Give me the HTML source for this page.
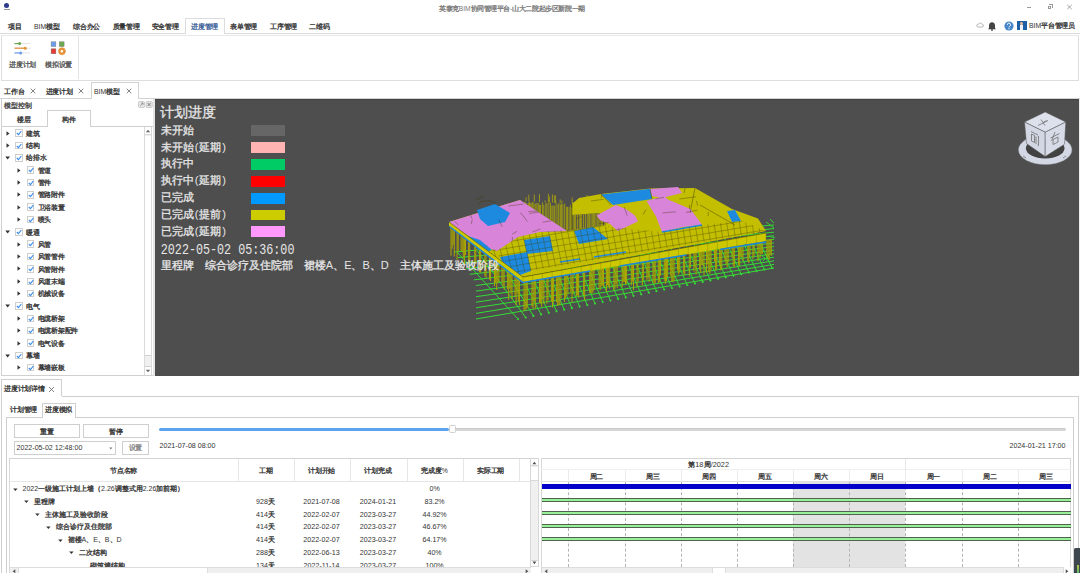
<!DOCTYPE html>
<html><head><meta charset="utf-8">
<style>
*{margin:0;padding:0;box-sizing:border-box}
html,body{width:1080px;height:573px;overflow:hidden;background:#fff;font-family:"Liberation Sans",sans-serif;color:#333}
.a{position:absolute;white-space:nowrap}
.t{font-size:6.8px;line-height:8px;color:#333}
.ln{position:absolute;background:#d9d9d9}
.p{display:inline-block;width:.5em;text-align:center;font-weight:normal}
i{display:inline-block;width:1em;text-align:center;font-style:normal;-webkit-text-stroke:.3px}
</style></head><body>
<!-- TITLE BAR -->
<div class="a" style="left:4px;top:3px;width:5px;height:5px;border-radius:50%;background:#2b3a8a"></div>
<div class="a" style="left:3.5px;top:8.5px;width:6px;height:1.2px;background:#999"></div>
<div class="a t" style="left:439px;top:5px;font-size:6.6px;color:#777"><i>英</i><i>泰</i><i>克</i>BIM<i>协</i><i>同</i><i>管</i><i>理</i><i>平</i><i>台</i>-<i>山</i><i>大</i><i>二</i><i>院</i><i>起</i><i>步</i><i>区</i><i>新</i><i>院</i><i>一</i><i>期</i></div>
<div class="a" style="left:1027px;top:7.2px;width:4px;height:0.8px;background:#999"></div>
<div class="a" style="left:1047.5px;top:5.5px;width:3.5px;height:3.5px;border:0.8px solid #999"></div>
<div class="a" style="left:1049px;top:4.3px;width:3.5px;height:3.5px;border-top:0.8px solid #999;border-right:0.8px solid #999"></div>
<svg class="a" style="left:1066px;top:4px" width="7" height="6"><path d="M1.2 0.8L5.8 5.2M5.8 0.8L1.2 5.2" stroke="#888" stroke-width="0.75"/></svg>

<!-- MENU BAR -->
<div class="a t" style="left:7.8px;top:22.5px"><i>项</i><i>目</i></div>
<div class="a t" style="left:34px;top:22.5px">BIM<i>模</i><i>型</i></div>
<div class="a t" style="left:73px;top:22.5px"><i>综</i><i>合</i><i>办</i><i>公</i></div>
<div class="a t" style="left:112.5px;top:22.5px"><i>质</i><i>量</i><i>管</i><i>理</i></div>
<div class="a t" style="left:151.5px;top:22.5px"><i>安</i><i>全</i><i>管</i><i>理</i></div>
<div class="a" style="left:185px;top:18px;width:40px;height:16px;border:1px solid #dcdcdc;border-bottom:none;background:#fff"></div>
<div class="a t" style="left:191px;top:22.5px;color:#3d5f9a"><i>进</i><i>度</i><i>管</i><i>理</i></div>
<div class="a t" style="left:230px;top:22.5px"><i>表</i><i>单</i><i>管</i><i>理</i></div>
<div class="a t" style="left:270px;top:22.5px"><i>工</i><i>序</i><i>管</i><i>理</i></div>
<div class="a t" style="left:309px;top:22.5px"><i>二</i><i>维</i><i>码</i></div>
<div class="ln" style="left:0;top:33px;width:185px;height:1px"></div>
<div class="ln" style="left:225px;top:33px;width:855px;height:1px"></div>
<!-- right icons -->
<svg class="a" style="left:975.5px;top:22px" width="8" height="6"><path d="M1.8 5h4.4a1.3 1.3 0 0 0 0-2.6a1.8 1.8 0 0 0-3.4-.3a1.4 1.4 0 0 0-1 2.9z" fill="none" stroke="#999" stroke-width="0.7"/></svg>
<svg class="a" style="left:987px;top:20.5px" width="10" height="10"><path d="M5 1.2c-2 0-3 1.6-3 3.4v2.4l-1 1.2h8l-1-1.2V4.6c0-1.8-1-3.4-3-3.4z" fill="#444"/><circle cx="5" cy="9" r="0.9" fill="#444"/></svg>
<svg class="a" style="left:1003.5px;top:20.5px" width="10" height="10"><circle cx="5" cy="5" r="4.6" fill="#4a87c9"/><path d="M3.4 3.8a1.6 1.6 0 1 1 2.3 1.4c-.5.3-.7.6-.7 1.2" fill="none" stroke="#fff" stroke-width="1"/><circle cx="5" cy="7.7" r="0.6" fill="#fff"/></svg>
<div class="a" style="left:1017px;top:20.5px;width:9.5px;height:9.5px;background:#1f5fa8"></div>
<div class="a" style="left:1020.3px;top:21.8px;width:3px;height:3.4px;border-radius:50%;background:#e8b890"></div>
<div class="a" style="left:1020.2px;top:25.3px;width:3.2px;height:4.7px;background:#eef3f8"></div>
<div class="a t" style="left:1029px;top:22px">BIM<i>平</i><i>台</i><i>管</i><i>理</i><i>员</i></div>

<!-- RIBBON -->
<div class="a" style="left:1px;top:34.5px;width:1078px;height:46px;border:1px solid #dedede;border-top-color:#e8e8e8"></div>
<div class="ln" style="left:78px;top:36px;width:1px;height:43px;background:#e4e4e4"></div>
<svg class="a" style="left:13px;top:40px" width="20" height="16">
 <line x1="1.5" y1="3.6" x2="17.5" y2="3.6" stroke="#e3e3e3" stroke-width="1"/>
 <line x1="1.5" y1="3.6" x2="6.6" y2="3.6" stroke="#6aa84f" stroke-width="1.2"/>
 <circle cx="6.6" cy="3.6" r="1.5" fill="#6aa84f"/>
 <line x1="1.5" y1="8.2" x2="17.5" y2="8.2" stroke="#e3e3e3" stroke-width="1"/>
 <line x1="1.5" y1="8.2" x2="12.2" y2="8.2" stroke="#e69138" stroke-width="1.2"/>
 <circle cx="12.2" cy="8.2" r="1.5" fill="#e69138"/>
 <line x1="1.5" y1="12.9" x2="17.5" y2="12.9" stroke="#e3e3e3" stroke-width="1"/>
 <line x1="1.5" y1="12.9" x2="7.7" y2="12.9" stroke="#6d9eeb" stroke-width="1.2"/>
 <circle cx="7.7" cy="12.9" r="1.5" fill="#6d9eeb"/>
</svg>
<svg class="a" style="left:50px;top:41px" width="18" height="16">
 <rect x="1.1" y="0.8" width="4.8" height="4.8" fill="#6d9eeb" stroke="#777" stroke-width="0.4"/>
 <rect x="9.3" y="0.8" width="4.8" height="4.8" fill="#6aa84f" stroke="#777" stroke-width="0.4"/>
 <rect x="1.1" y="7.8" width="4.8" height="5" fill="#e53935" stroke="#777" stroke-width="0.4"/>
 <circle cx="11.9" cy="10.2" r="2.4" fill="none" stroke="#e69138" stroke-width="2.2"/>
 <circle cx="11.9" cy="10.2" r="3.6" fill="none" stroke="#e69138" stroke-width="0.9" stroke-dasharray="1.2 1.1"/>
</svg>
<div class="a t" style="left:9px;top:61.3px;color:#555"><i>进</i><i>度</i><i>计</i><i>划</i></div>
<div class="a t" style="left:45px;top:61.3px;color:#555"><i>模</i><i>拟</i><i>设</i><i>置</i></div>

<!-- DOC TABS -->
<div class="a t" style="left:4.2px;top:87.7px"><i>工</i><i>作</i><i>台</i></div>
<svg class="a" style="left:29.5px;top:88px" width="6" height="6"><path d="M0.7 0.7L5.3 5.3M5.3 0.7L0.7 5.3" stroke="#666" stroke-width="0.8"/></svg>
<div class="a t" style="left:45.5px;top:87.7px"><i>进</i><i>度</i><i>计</i><i>划</i></div>
<svg class="a" style="left:77.8px;top:88px" width="6" height="6"><path d="M0.7 0.7L5.3 5.3M5.3 0.7L0.7 5.3" stroke="#666" stroke-width="0.8"/></svg>
<div class="ln" style="left:0;top:98px;width:1080px;height:1px;background:#d2d2d2"></div>
<div class="a" style="left:90.5px;top:82px;width:48px;height:17px;border:1px solid #d2d2d2;border-bottom:none;background:#fff"></div>
<div class="a t" style="left:94px;top:87.7px">BIM<i>模</i><i>型</i></div>
<svg class="a" style="left:125.8px;top:88px" width="6" height="6"><path d="M0.7 0.7L5.3 5.3M5.3 0.7L0.7 5.3" stroke="#666" stroke-width="0.8"/></svg>

<!-- MAIN: LEFT PANEL -->
<div class="a" style="left:1px;top:99px;width:151.5px;height:277px;border-left:1px solid #d0d0d0;border-bottom:1.4px solid #d0d0d0;background:#fff"></div>
<div class="a t" style="left:4.3px;top:101.5px;color:#444"><i>模</i><i>型</i><i>控</i><i>制</i></div>
<svg class="a" style="left:137.5px;top:101px" width="15" height="7"><rect x="0.5" y="0.5" width="6" height="6" rx="1" fill="#e6e6e6" stroke="#aaa" stroke-width="0.5"/><path d="M2 5L5 2M3 2h2v2" stroke="#777" stroke-width="0.6" fill="none"/><rect x="8" y="0.5" width="6.3" height="6" rx="1" fill="#e6e6e6" stroke="#aaa" stroke-width="0.5"/><path d="M9.6 2l3 3M12.6 2l-3 3" stroke="#555" stroke-width="0.7"/></svg>
<div class="ln" style="left:1.5px;top:126px;width:45px;height:1px;background:#cfcfcf"></div>
<div class="ln" style="left:90.5px;top:126px;width:62px;height:1px;background:#cfcfcf"></div>
<div class="a" style="left:46.5px;top:110.4px;width:44px;height:16.6px;border:1px solid #cfcfcf;border-bottom:none;background:#fff"></div>
<div class="a t" style="left:17px;top:115.5px"><i>楼</i><i>层</i></div>
<div class="a t" style="left:62px;top:115.5px"><i>构</i><i>件</i></div>
<div class="a" style="left:144.3px;top:126.5px;width:7.6px;height:248px;background:#f0f0f0;border-left:1px solid #dadada;border-right:1px solid #dadada"></div>
<div class="a" style="left:144.8px;top:126.8px;width:6.6px;height:8px;background:#fff;border-bottom:1px solid #d8d8d8"></div>
<svg class="a" style="left:145px;top:128.5px" width="6" height="4"><path d="M0.8 3.3L3 0.8L5.2 3.3z" fill="#666"/></svg>
<div class="a" style="left:144.8px;top:135.5px;width:6.6px;height:220.5px;background:#fff;border-bottom:1px solid #d0d0d0"></div>
<div class="a" style="left:144.8px;top:366px;width:6.6px;height:8.7px;background:#fff;border-top:1px solid #d0d0d0"></div>
<svg class="a" style="left:145px;top:368.5px" width="6" height="4"><path d="M0.8 0.8L3 3.3L5.2 0.8z" fill="#666"/></svg>

<svg class="a" style="left:5.5px;top:130.6px" width="5" height="5"><path d="M0.5 0.3L3.5 2.5L0.5 4.7z" fill="#333"/></svg>
<div class="a" style="left:15.2px;top:129.3px;width:7.5px;height:7.5px;border:1px solid #cfcfcf;background:#fff"></div>
<svg class="a" style="left:16.2px;top:130.3px" width="6" height="6"><path d="M0.8 3L2.4 4.6L5.3 1.2" fill="none" stroke="#3d8ef0" stroke-width="1.1"/></svg>
<div class="a t" style="left:26.0px;top:129.7px"><i>建</i><i>筑</i></div>
<svg class="a" style="left:5.5px;top:142.9px" width="5" height="5"><path d="M0.5 0.3L3.5 2.5L0.5 4.7z" fill="#333"/></svg>
<div class="a" style="left:15.2px;top:141.6px;width:7.5px;height:7.5px;border:1px solid #cfcfcf;background:#fff"></div>
<svg class="a" style="left:16.2px;top:142.6px" width="6" height="6"><path d="M0.8 3L2.4 4.6L5.3 1.2" fill="none" stroke="#3d8ef0" stroke-width="1.1"/></svg>
<div class="a t" style="left:26.0px;top:142.0px"><i>结</i><i>构</i></div>
<svg class="a" style="left:4.9px;top:156.0px" width="6" height="4"><path d="M0.3 0.5L5 0.5L2.65 3.4z" fill="#333"/></svg>
<div class="a" style="left:15.2px;top:154.0px;width:7.5px;height:7.5px;border:1px solid #cfcfcf;background:#fff"></div>
<svg class="a" style="left:16.2px;top:155.0px" width="6" height="6"><path d="M0.8 3L2.4 4.6L5.3 1.2" fill="none" stroke="#3d8ef0" stroke-width="1.1"/></svg>
<div class="a t" style="left:26.0px;top:154.4px"><i>给</i><i>排</i><i>水</i></div>
<svg class="a" style="left:17.0px;top:167.6px" width="5" height="5"><path d="M0.5 0.3L3.5 2.5L0.5 4.7z" fill="#333"/></svg>
<div class="a" style="left:26.7px;top:166.3px;width:7.5px;height:7.5px;border:1px solid #cfcfcf;background:#fff"></div>
<svg class="a" style="left:27.7px;top:167.3px" width="6" height="6"><path d="M0.8 3L2.4 4.6L5.3 1.2" fill="none" stroke="#3d8ef0" stroke-width="1.1"/></svg>
<div class="a t" style="left:37.5px;top:166.7px"><i>管</i><i>道</i></div>
<svg class="a" style="left:17.0px;top:180.0px" width="5" height="5"><path d="M0.5 0.3L3.5 2.5L0.5 4.7z" fill="#333"/></svg>
<div class="a" style="left:26.7px;top:178.7px;width:7.5px;height:7.5px;border:1px solid #cfcfcf;background:#fff"></div>
<svg class="a" style="left:27.7px;top:179.7px" width="6" height="6"><path d="M0.8 3L2.4 4.6L5.3 1.2" fill="none" stroke="#3d8ef0" stroke-width="1.1"/></svg>
<div class="a t" style="left:37.5px;top:179.1px"><i>管</i><i>件</i></div>
<svg class="a" style="left:17.0px;top:192.3px" width="5" height="5"><path d="M0.5 0.3L3.5 2.5L0.5 4.7z" fill="#333"/></svg>
<div class="a" style="left:26.7px;top:191.0px;width:7.5px;height:7.5px;border:1px solid #cfcfcf;background:#fff"></div>
<svg class="a" style="left:27.7px;top:192.0px" width="6" height="6"><path d="M0.8 3L2.4 4.6L5.3 1.2" fill="none" stroke="#3d8ef0" stroke-width="1.1"/></svg>
<div class="a t" style="left:37.5px;top:191.4px"><i>管</i><i>路</i><i>附</i><i>件</i></div>
<svg class="a" style="left:17.0px;top:204.7px" width="5" height="5"><path d="M0.5 0.3L3.5 2.5L0.5 4.7z" fill="#333"/></svg>
<div class="a" style="left:26.7px;top:203.4px;width:7.5px;height:7.5px;border:1px solid #cfcfcf;background:#fff"></div>
<svg class="a" style="left:27.7px;top:204.4px" width="6" height="6"><path d="M0.8 3L2.4 4.6L5.3 1.2" fill="none" stroke="#3d8ef0" stroke-width="1.1"/></svg>
<div class="a t" style="left:37.5px;top:203.8px"><i>卫</i><i>浴</i><i>装</i><i>置</i></div>
<svg class="a" style="left:17.0px;top:217.1px" width="5" height="5"><path d="M0.5 0.3L3.5 2.5L0.5 4.7z" fill="#333"/></svg>
<div class="a" style="left:26.7px;top:215.8px;width:7.5px;height:7.5px;border:1px solid #cfcfcf;background:#fff"></div>
<svg class="a" style="left:27.7px;top:216.8px" width="6" height="6"><path d="M0.8 3L2.4 4.6L5.3 1.2" fill="none" stroke="#3d8ef0" stroke-width="1.1"/></svg>
<div class="a t" style="left:37.5px;top:216.2px"><i>喷</i><i>头</i></div>
<svg class="a" style="left:4.9px;top:230.1px" width="6" height="4"><path d="M0.3 0.5L5 0.5L2.65 3.4z" fill="#333"/></svg>
<div class="a" style="left:15.2px;top:228.1px;width:7.5px;height:7.5px;border:1px solid #cfcfcf;background:#fff"></div>
<svg class="a" style="left:16.2px;top:229.1px" width="6" height="6"><path d="M0.8 3L2.4 4.6L5.3 1.2" fill="none" stroke="#3d8ef0" stroke-width="1.1"/></svg>
<div class="a t" style="left:26.0px;top:228.5px"><i>暖</i><i>通</i></div>
<svg class="a" style="left:17.0px;top:241.8px" width="5" height="5"><path d="M0.5 0.3L3.5 2.5L0.5 4.7z" fill="#333"/></svg>
<div class="a" style="left:26.7px;top:240.4px;width:7.5px;height:7.5px;border:1px solid #cfcfcf;background:#fff"></div>
<svg class="a" style="left:27.7px;top:241.4px" width="6" height="6"><path d="M0.8 3L2.4 4.6L5.3 1.2" fill="none" stroke="#3d8ef0" stroke-width="1.1"/></svg>
<div class="a t" style="left:37.5px;top:240.8px"><i>风</i><i>管</i></div>
<svg class="a" style="left:17.0px;top:254.1px" width="5" height="5"><path d="M0.5 0.3L3.5 2.5L0.5 4.7z" fill="#333"/></svg>
<div class="a" style="left:26.7px;top:252.8px;width:7.5px;height:7.5px;border:1px solid #cfcfcf;background:#fff"></div>
<svg class="a" style="left:27.7px;top:253.8px" width="6" height="6"><path d="M0.8 3L2.4 4.6L5.3 1.2" fill="none" stroke="#3d8ef0" stroke-width="1.1"/></svg>
<div class="a t" style="left:37.5px;top:253.2px"><i>风</i><i>管</i><i>管</i><i>件</i></div>
<svg class="a" style="left:17.0px;top:266.4px" width="5" height="5"><path d="M0.5 0.3L3.5 2.5L0.5 4.7z" fill="#333"/></svg>
<div class="a" style="left:26.7px;top:265.1px;width:7.5px;height:7.5px;border:1px solid #cfcfcf;background:#fff"></div>
<svg class="a" style="left:27.7px;top:266.1px" width="6" height="6"><path d="M0.8 3L2.4 4.6L5.3 1.2" fill="none" stroke="#3d8ef0" stroke-width="1.1"/></svg>
<div class="a t" style="left:37.5px;top:265.6px"><i>风</i><i>管</i><i>附</i><i>件</i></div>
<svg class="a" style="left:17.0px;top:278.8px" width="5" height="5"><path d="M0.5 0.3L3.5 2.5L0.5 4.7z" fill="#333"/></svg>
<div class="a" style="left:26.7px;top:277.5px;width:7.5px;height:7.5px;border:1px solid #cfcfcf;background:#fff"></div>
<svg class="a" style="left:27.7px;top:278.5px" width="6" height="6"><path d="M0.8 3L2.4 4.6L5.3 1.2" fill="none" stroke="#3d8ef0" stroke-width="1.1"/></svg>
<div class="a t" style="left:37.5px;top:277.9px"><i>风</i><i>道</i><i>末</i><i>端</i></div>
<svg class="a" style="left:17.0px;top:291.1px" width="5" height="5"><path d="M0.5 0.3L3.5 2.5L0.5 4.7z" fill="#333"/></svg>
<div class="a" style="left:26.7px;top:289.8px;width:7.5px;height:7.5px;border:1px solid #cfcfcf;background:#fff"></div>
<svg class="a" style="left:27.7px;top:290.8px" width="6" height="6"><path d="M0.8 3L2.4 4.6L5.3 1.2" fill="none" stroke="#3d8ef0" stroke-width="1.1"/></svg>
<div class="a t" style="left:37.5px;top:290.2px"><i>机</i><i>械</i><i>设</i><i>备</i></div>
<svg class="a" style="left:4.9px;top:304.2px" width="6" height="4"><path d="M0.3 0.5L5 0.5L2.65 3.4z" fill="#333"/></svg>
<div class="a" style="left:15.2px;top:302.2px;width:7.5px;height:7.5px;border:1px solid #cfcfcf;background:#fff"></div>
<svg class="a" style="left:16.2px;top:303.2px" width="6" height="6"><path d="M0.8 3L2.4 4.6L5.3 1.2" fill="none" stroke="#3d8ef0" stroke-width="1.1"/></svg>
<div class="a t" style="left:26.0px;top:302.6px"><i>电</i><i>气</i></div>
<svg class="a" style="left:17.0px;top:315.9px" width="5" height="5"><path d="M0.5 0.3L3.5 2.5L0.5 4.7z" fill="#333"/></svg>
<div class="a" style="left:26.7px;top:314.6px;width:7.5px;height:7.5px;border:1px solid #cfcfcf;background:#fff"></div>
<svg class="a" style="left:27.7px;top:315.6px" width="6" height="6"><path d="M0.8 3L2.4 4.6L5.3 1.2" fill="none" stroke="#3d8ef0" stroke-width="1.1"/></svg>
<div class="a t" style="left:37.5px;top:315.0px"><i>电</i><i>缆</i><i>桥</i><i>架</i></div>
<svg class="a" style="left:17.0px;top:328.2px" width="5" height="5"><path d="M0.5 0.3L3.5 2.5L0.5 4.7z" fill="#333"/></svg>
<div class="a" style="left:26.7px;top:326.9px;width:7.5px;height:7.5px;border:1px solid #cfcfcf;background:#fff"></div>
<svg class="a" style="left:27.7px;top:327.9px" width="6" height="6"><path d="M0.8 3L2.4 4.6L5.3 1.2" fill="none" stroke="#3d8ef0" stroke-width="1.1"/></svg>
<div class="a t" style="left:37.5px;top:327.3px"><i>电</i><i>缆</i><i>桥</i><i>架</i><i>配</i><i>件</i></div>
<svg class="a" style="left:17.0px;top:340.5px" width="5" height="5"><path d="M0.5 0.3L3.5 2.5L0.5 4.7z" fill="#333"/></svg>
<div class="a" style="left:26.7px;top:339.2px;width:7.5px;height:7.5px;border:1px solid #cfcfcf;background:#fff"></div>
<svg class="a" style="left:27.7px;top:340.2px" width="6" height="6"><path d="M0.8 3L2.4 4.6L5.3 1.2" fill="none" stroke="#3d8ef0" stroke-width="1.1"/></svg>
<div class="a t" style="left:37.5px;top:339.6px"><i>电</i><i>气</i><i>设</i><i>备</i></div>
<svg class="a" style="left:4.9px;top:353.6px" width="6" height="4"><path d="M0.3 0.5L5 0.5L2.65 3.4z" fill="#333"/></svg>
<div class="a" style="left:15.2px;top:351.6px;width:7.5px;height:7.5px;border:1px solid #cfcfcf;background:#fff"></div>
<svg class="a" style="left:16.2px;top:352.6px" width="6" height="6"><path d="M0.8 3L2.4 4.6L5.3 1.2" fill="none" stroke="#3d8ef0" stroke-width="1.1"/></svg>
<div class="a t" style="left:26.0px;top:352.0px"><i>幕</i><i>墙</i></div>
<svg class="a" style="left:17.0px;top:365.2px" width="5" height="5"><path d="M0.5 0.3L3.5 2.5L0.5 4.7z" fill="#333"/></svg>
<div class="a" style="left:26.7px;top:363.9px;width:7.5px;height:7.5px;border:1px solid #cfcfcf;background:#fff"></div>
<svg class="a" style="left:27.7px;top:364.9px" width="6" height="6"><path d="M0.8 3L2.4 4.6L5.3 1.2" fill="none" stroke="#3d8ef0" stroke-width="1.1"/></svg>
<div class="a t" style="left:37.5px;top:364.4px"><i>幕</i><i>墙</i><i>嵌</i><i>板</i></div>
<!-- VIEWPORT -->
<div class="a" style="left:155.3px;top:99.3px;width:923.4px;height:276.5px;background:#4e4e4e;overflow:hidden;box-shadow:inset 0 1px 1px rgba(0,0,0,.15)" id="vp">
<svg class="a" style="left:-155.3px;top:-99.3px" width="1080" height="573" viewBox="0 0 1080 573">
<defs><clipPath id="tc"><polygon points="449,222 520,200 567,231 572,204 579,198 601,194 650,188.5 695,188 732,209 758,218.6 766,231 523,277"/></clipPath><clipPath id="fc"><polygon points="523,270 766,229 766,241 523,282 449,226 449,221"/></clipPath></defs>
<path d="M457.1 252.0L518.0 319.0 M477.4 251.2L525.7 317.5 M493.5 250.4L533.4 315.9 M507.2 249.6L541.1 314.4 M519.5 248.8L548.8 312.8 M530.6 248.1L556.5 311.3 M538.5 247.3L564.2 309.7 M546.3 246.5L571.9 308.2 M554.2 245.7L579.6 306.6 M562.1 244.9L587.3 305.1 M570.0 244.1L595.0 303.5 M577.9 243.3L602.7 302.0 M585.8 242.5L610.4 300.5 M593.7 241.8L618.1 298.9 M601.6 241.0L625.8 297.4 M609.5 240.2L633.5 295.8 M617.4 239.4L641.2 294.3 M625.3 238.6L648.8 292.7 M633.2 237.8L656.5 291.2 M641.1 237.0L664.2 289.6 M649.0 236.2L671.9 288.1 M656.9 235.5L679.6 286.5 M664.8 234.7L687.3 285.0 M672.7 233.9L695.0 283.5 M680.6 233.1L702.7 281.9 M688.5 232.3L710.4 280.4 M696.5 231.5L718.1 278.8 M704.4 230.7L725.8 277.3 M712.3 229.9L733.5 275.7 M720.3 229.2L741.2 274.2 M728.2 228.4L748.9 272.6 M736.1 227.6L756.6 271.1 M744.1 226.8L764.3 269.5 M752.0 226.0L772.0 268.0 M454.0 252.0L774 225.0 M458.0 257.6L774 228.6 M461.9 263.2L774 232.2 M465.9 268.8L774 235.8 M469.8 274.3L774 239.3 M473.8 279.9L774 242.9 M476.0 285.5L774 246.5 M476.0 291.1L774 250.1 M476.0 296.7L774 253.7 M476.0 302.2L774 257.2 M476.0 307.8L774 260.8 M476.0 313.4L774 264.4 M476.0 319.0L774 268.0" stroke="#33dd33" stroke-width="1" fill="none"/>
<g fill="#33dd33"><circle cx="518.0" cy="319.0" r="1.1"/><circle cx="525.7" cy="317.5" r="1.1"/><circle cx="533.4" cy="315.9" r="1.1"/><circle cx="541.1" cy="314.4" r="1.1"/><circle cx="548.8" cy="312.8" r="1.1"/><circle cx="556.5" cy="311.3" r="1.1"/><circle cx="564.2" cy="309.7" r="1.1"/><circle cx="571.9" cy="308.2" r="1.1"/><circle cx="579.6" cy="306.6" r="1.1"/><circle cx="587.3" cy="305.1" r="1.1"/><circle cx="595.0" cy="303.5" r="1.1"/><circle cx="602.7" cy="302.0" r="1.1"/><circle cx="610.4" cy="300.5" r="1.1"/><circle cx="618.1" cy="298.9" r="1.1"/><circle cx="625.8" cy="297.4" r="1.1"/><circle cx="633.5" cy="295.8" r="1.1"/><circle cx="641.2" cy="294.3" r="1.1"/><circle cx="648.8" cy="292.7" r="1.1"/><circle cx="656.5" cy="291.2" r="1.1"/><circle cx="664.2" cy="289.6" r="1.1"/><circle cx="671.9" cy="288.1" r="1.1"/><circle cx="679.6" cy="286.5" r="1.1"/><circle cx="687.3" cy="285.0" r="1.1"/><circle cx="695.0" cy="283.5" r="1.1"/><circle cx="702.7" cy="281.9" r="1.1"/><circle cx="710.4" cy="280.4" r="1.1"/><circle cx="718.1" cy="278.8" r="1.1"/><circle cx="725.8" cy="277.3" r="1.1"/><circle cx="733.5" cy="275.7" r="1.1"/><circle cx="741.2" cy="274.2" r="1.1"/><circle cx="748.9" cy="272.6" r="1.1"/><circle cx="756.6" cy="271.1" r="1.1"/><circle cx="764.3" cy="269.5" r="1.1"/><circle cx="772.0" cy="268.0" r="1.1"/></g>
<path d="M766 222l8 6M770 219l4 4M769 236l6 2M762 256l7 5M769 255l-6 6" stroke="#33dd33" stroke-width="0.9"/>
<path d="M451.0 226.5v29.3 M452.1 227.3v21.5 M453.2 228.2v16.7 M454.3 229.0v27.5 M457.1 231.2v28.7 M458.2 232.0v19.0 M461.1 234.1v17.0 M462.2 235.0v17.3 M463.3 235.8v21.9 M464.4 236.6v27.6 M465.5 237.4v17.7 M468.6 239.8v24.1 M469.7 240.7v21.6 M474.7 244.5v23.8 M475.8 245.3v17.9 M479.5 248.1v24.0 M480.6 248.9v23.8 M484.9 252.2v24.1 M486.0 253.0v24.9 M489.5 255.7v23.9 M490.6 256.5v24.7 M494.5 259.4v26.9 M495.6 260.2v22.5 M496.7 261.1v28.9 M497.8 261.9v21.1 M498.9 262.7v19.5 M501.9 265.1v17.1 M503.0 265.9v20.2 M504.1 266.7v22.9 M507.6 269.3v20.0 M508.7 270.2v29.7 M509.8 271.0v17.7 M510.9 271.8v21.9 M512.0 272.7v26.6 M515.0 274.9v21.9 M516.1 275.7v29.5 M517.2 276.6v17.1 M518.3 277.4v23.8 M519.4 278.2v27.0 M524.0 280.8v30.3 M525.1 280.6v29.0 M526.2 280.5v28.8 M527.3 280.3v27.3 M532.0 279.5v27.2 M533.1 279.3v29.5 M534.2 279.1v22.2 M535.3 278.9v29.8 M539.5 278.2v24.6 M540.6 278.0v25.7 M541.7 277.8v29.1 M542.8 277.7v21.3 M543.9 277.5v26.5 M546.9 277.0v26.7 M548.0 276.8v23.4 M551.4 276.2v25.4 M552.5 276.0v31.5 M553.6 275.8v26.4 M556.6 275.3v26.9 M557.7 275.1v30.9 M558.8 275.0v30.0 M559.9 274.8v30.5 M561.0 274.6v23.4 M564.6 274.0v28.1 M565.7 273.8v24.4 M566.8 273.6v22.6 M567.9 273.4v20.7 M570.9 272.9v19.7 M572.0 272.7v29.5 M573.1 272.5v21.7 M576.4 272.0v24.4 M577.5 271.8v23.7 M578.6 271.6v26.0 M583.6 270.8v24.5 M584.7 270.6v29.4 M589.7 269.8v23.4 M590.8 269.6v23.3 M591.9 269.4v24.3 M593.0 269.2v23.3 M594.1 269.0v20.7 M599.1 268.2v20.1 M600.2 268.0v22.2 M601.3 267.8v18.7 M602.4 267.6v18.0 M603.5 267.4v19.8 M606.4 266.9v25.2 M607.5 266.7v18.6 M608.6 266.6v20.2 M609.7 266.4v22.2 M613.9 265.7v24.7 M615.0 265.5v23.1 M616.1 265.3v18.7 M617.2 265.1v23.1 M622.2 264.3v22.8 M623.3 264.1v18.0 M624.4 263.9v18.2 M625.5 263.7v21.0 M626.6 263.5v20.0 M631.3 262.7v22.8 M632.4 262.5v19.0 M633.5 262.4v27.9 M637.0 261.8v25.4 M638.1 261.6v19.8 M642.3 260.9v24.4 M643.4 260.7v19.1 M646.9 260.1v20.1 M648.0 259.9v18.4 M649.1 259.7v22.2 M653.0 259.1v22.9 M654.1 258.9v24.9 M655.2 258.7v24.5 M658.3 258.2v25.1 M659.4 258.0v24.1 M660.5 257.8v17.8 M664.3 257.2v23.7 M665.4 257.0v26.8 M666.5 256.8v24.3 M667.6 256.6v20.4 M670.7 256.1v20.0 M671.8 255.9v25.8 M672.9 255.7v26.4 M674.0 255.5v25.9 M677.5 254.9v15.5 M678.6 254.7v19.9 M679.7 254.6v18.2 M683.6 253.9v19.7 M684.7 253.7v21.8 M689.3 252.9v23.7 M690.4 252.8v15.1 M693.9 252.2v19.2 M695.0 252.0v15.5 M696.1 251.8v22.8 M699.6 251.2v18.7 M700.7 251.0v22.0 M701.8 250.8v14.1 M702.9 250.7v14.9 M704.0 250.5v24.9 M706.6 250.0v22.5 M707.7 249.8v14.5 M708.8 249.6v22.6 M709.9 249.5v24.4 M711.0 249.3v20.5 M714.5 248.7v12.7 M715.6 248.5v22.0 M716.7 248.3v21.0 M719.6 247.8v17.4 M720.7 247.7v22.6 M721.8 247.5v22.0 M724.9 246.9v14.5 M726.0 246.8v17.9 M727.1 246.6v21.0 M728.2 246.4v15.7 M732.1 245.7v12.3 M733.2 245.5v20.4 M734.3 245.3v22.2 M738.6 244.6v21.1 M739.7 244.4v21.7 M740.8 244.3v12.7 M741.9 244.1v12.9 M743.0 243.9v17.1 M747.8 243.1v18.1 M748.9 242.9v20.0 M750.0 242.7v12.4 M752.9 242.2v17.2 M754.0 242.0v14.4 M757.9 241.4v19.7 M759.0 241.2v11.5 M760.1 241.0v16.9 M761.2 240.8v13.1 M762.3 240.6v13.4 M766.9 239.9v16.5 M768.0 239.7v18.9 M769.1 239.5v20.6 M770.2 239.3v15.0 M771.3 239.1v16.9" stroke="#aca600" stroke-width="1" fill="none"/>
<path d="M560.9 215.2v16.1 M562.5 208.3v24.9 M575.1 221.0v25.0 M541.7 210.9v25.0 M585.8 197.4v10.2 M555.6 195.3v12.3 M527.6 214.4v22.1 M590.2 197.9v20.9 M572.2 197.6v23.9 M595.5 200.0v25.1 M552.3 208.6v25.8 M585.3 198.2v15.8 M561.2 203.9v11.5 M546.2 216.1v8.4 M564.1 207.1v8.3 M547.2 213.0v17.2 M526.9 224.5v22.2 M595.8 196.4v12.8 M525.0 217.9v12.9 M531.8 206.5v24.4 M584.2 201.3v10.7 M591.9 211.3v20.6 M528.8 194.8v20.4 M554.3 195.3v24.9 M570.2 218.7v9.5 M587.1 195.1v23.5 M556.5 203.9v18.0 M592.4 201.6v10.3 M562.0 200.6v10.0 M534.3 194.6v11.6 M545.7 202.8v21.7 M544.0 209.0v11.2 M548.4 193.6v12.5 M523.2 216.5v17.9 M536.4 208.2v24.8 M530.1 219.2v15.8 M559.6 219.7v15.1 M560.5 215.0v25.7 M548.0 219.6v20.7 M570.3 206.0v14.3 M526.1 197.2v9.3 M578.3 201.2v10.9 M528.4 219.9v23.7 M573.0 202.0v12.4 M544.3 207.7v10.8 M555.9 201.4v25.3 M595.9 210.5v12.4 M595.4 202.9v14.4 M522.1 205.2v16.5 M560.2 199.4v17.1 M522.4 201.5v9.6 M552.4 194.3v8.4 M545.1 200.4v18.5 M562.2 217.0v19.8 M576.4 221.1v15.0 M546.8 224.5v10.7 M577.0 213.6v8.8 M585.5 221.5v19.3 M577.8 219.0v10.5 M561.8 209.1v23.0 M583.2 219.4v18.5 M589.9 214.9v20.5 M539.5 194.0v10.4 M549.4 196.4v23.0 M564.4 213.1v19.3 M573.7 208.7v8.1 M582.6 216.9v17.1 M562.7 214.1v9.2 M578.0 201.1v9.3 M542.2 216.3v11.7" stroke="#b8b200" stroke-width="0.7" fill="none"/>
<polygon points="449,222 520,200 567,231 572,204 579,198 601,194 650,188.5 695,188 732,209 758,218.6 766,231 523,277" fill="#c3be00"/>
<polygon points="521,201 572,204 572,215 600,213 606,225 567,231 540,232" fill="#4e4e4e"/>
<clipPath id="pc"><polygon points="521,201 572,204 572,215 600,213 606,225 567,231 540,232"/></clipPath>
<g clip-path="url(#pc)"><path d="M522.0 202.5V232 M524.0 201.7V232 M525.3 201.8V232 M526.9 203.0V232 M528.5 202.7V232 M529.5 200.8V232 M530.7 203.2V232 M531.9 202.6V232 M532.8 200.7V232 M534.0 203.2V232 M535.7 203.4V232 M536.9 202.8V232 M538.3 202.8V232 M539.4 204.5V232 M540.5 205.0V232 M542.4 201.3V232 M543.8 204.6V232 M545.8 203.3V232 M547.0 202.4V232 M548.9 202.6V232 M550.5 202.4V232 M551.9 205.8V232 M553.0 205.3V232 M554.4 205.7V232 M556.1 203.2V232 M558.0 204.4V232 M558.9 202.5V232 M560.4 204.5V232 M561.6 203.3V232 M562.9 204.1V232 M564.7 203.0V232 M566.4 206.5V232 M567.5 206.9V232 M569.1 207.0V232 M570.4 204.9V232 M571.7 207.6V232 M573.2 205.1V232 M574.6 204.9V232 M575.6 204.3V232 M577.4 205.2V232 M579.3 205.2V232 M580.5 206.3V232 M581.6 205.8V232 M583.6 208.0V232 M585.4 207.2V232 M587.3 208.6V232 M588.8 207.8V232 M589.7 207.9V232 M591.1 208.1V232 M592.7 206.4V232 M593.7 209.0V232 M594.7 207.3V232 M596.0 206.7V232 M597.7 209.5V232 M598.9 208.4V232 M600.1 208.1V232 M601.5 206.6V232 M602.5 206.9V232 M604.4 208.2V232 M605.6 209.9V232" stroke="#b3ad00" stroke-width="0.75" fill="none"/></g>
<polygon points="449,222 520,200 567,231 540,232 518,237 497,251 488,248 451,225" fill="#d884d8"/>
<polygon points="596.5,215.6 615.8,205 625.4,208.8 635,215.6 638,221.3 626.3,227 617.7,231 610,224 600.4,220.4" fill="#d884d8"/>
<polygon points="646.5,201 664,196 668,199.4 690.5,209 702,224.7 681,227.3 663.5,231.7 662,232 656,216.5" fill="#d884d8"/>
<polygon points="650,189 678,187 682,193 662,198 652,196" fill="#d884d8"/>
<polygon points="601,194.4 650,188.7 652,199 613,205" fill="#1d8ae0"/>
<polygon points="477,210 495,204 510,213 505,222 488,226 480,219" fill="#1d8ae0"/>
<polygon points="500,257 527,252 531,271 517,276 505,268" fill="#1d8ae0"/>
<polygon points="524,240 550,236 553,251 527,254" fill="#1d8ae0"/>
<polygon points="574,231 593,227 608,239 579,244" fill="#1d8ae0"/>
<polygon points="727,211 735,210 741,221 732,222" fill="#1d8ae0"/>
<polygon points="468,236 480,240 492,250 486,252 470,242" fill="#1d8ae0"/>
<path d="M594 257l32 -5M560 262l20 -3M662 232l40 -7" stroke="#1d8ae0" stroke-width="1.6"/>
<clipPath id="gc"><polygon points="449,224 497,251 518,237 540,232 566.5,229.5 572,230 600,226 662,232 702,225 732,222 742,221 766,231 523,277"/></clipPath>
<g clip-path="url(#gc)"><path d="M449.0 214.0l320 -54 M455.2 219.2l320 -54 M461.3 224.5l320 -54 M467.5 229.8l320 -54 M473.7 235.0l320 -54 M479.8 240.2l320 -54 M486.0 245.5l320 -54 M492.2 250.8l320 -54 M498.3 256.0l320 -54 M504.5 261.2l320 -54 M510.7 266.5l320 -54 M516.8 271.8l320 -54 M523.0 277.0l320 -54 M500.0 276.0l-14.0 -60 M506.2 275.0l-13.9 -60 M512.4 273.9l-13.7 -60 M518.6 272.9l-13.6 -60 M524.7 271.8l-13.4 -60 M530.9 270.8l-13.3 -60 M537.1 269.7l-13.2 -60 M543.3 268.7l-13.0 -60 M549.5 267.6l-12.9 -60 M555.7 266.6l-12.7 -60 M561.9 265.5l-12.6 -60 M568.0 264.5l-12.5 -60 M574.2 263.4l-12.3 -60 M580.4 262.4l-12.2 -60 M586.6 261.3l-12.0 -60 M592.8 260.3l-11.9 -60 M599.0 259.3l-11.8 -60 M605.2 258.2l-11.6 -60 M611.3 257.2l-11.5 -60 M617.5 256.1l-11.3 -60 M623.7 255.1l-11.2 -60 M629.9 254.0l-11.1 -60 M636.1 253.0l-10.9 -60 M642.3 251.9l-10.8 -60 M648.5 250.9l-10.7 -60 M654.7 249.8l-10.5 -60 M660.8 248.8l-10.4 -60 M667.0 247.7l-10.2 -60 M673.2 246.7l-10.1 -60 M679.4 245.7l-10.0 -60 M685.6 244.6l-9.8 -60 M691.8 243.6l-9.7 -60 M698.0 242.5l-9.5 -60 M704.1 241.5l-9.4 -60 M710.3 240.4l-9.3 -60 M716.5 239.4l-9.1 -60 M722.7 238.3l-9.0 -60 M728.9 237.3l-8.8 -60 M735.1 236.2l-8.7 -60 M741.3 235.2l-8.6 -60 M747.4 234.1l-8.4 -60 M753.6 233.1l-8.3 -60 M759.8 232.0l-8.1 -60 M766.0 231.0l-8.0 -60" stroke="#3f3c00" stroke-width="0.55" fill="none" opacity="0.6"/></g>
<clipPath id="uc"><polygon points="449,222 520,200 567,231 540,232 518,237 497,251 488,248 451,225"/><polygon points="572,204 579,198 601,194 650,188.5 695,188 732,209 758,218.6 766,231 742,221 702,225 662,232 600,226 572,230"/></clipPath>
<g clip-path="url(#uc)"><path d="M591.7 194.9l5.3 -2.3 M478.7 201.3l12.0 -1.2 M686.1 212.4l11.3 -2.2 M556.5 190.0l17.5 -2.7 M608.6 226.3l-2.3 4.6 M528.3 211.6l17.4 -1.3 M725.0 187.4l13.9 -1.2 M599.1 223.6l9.5 -1.1 M710.1 240.7l-2.0 3.7 M498.6 219.4l3.5 7.3 M653.9 234.9l11.7 -2.9 M696.4 200.9l1.2 4.8 M490.3 202.1l1.6 3.7 M472.2 219.6l-0.9 4.3 M639.3 186.7l10.4 -1.1 M653.0 242.6l7.3 -2.5 M752.6 231.1l4.3 -2.0 M662.5 212.9l13.3 -1.1 M521.4 188.2l9.9 -1.6 M512.4 237.0l0.0 4.2 M755.5 205.9l-2.2 4.3 M689.5 204.9l-0.0 4.1 M520.3 212.7l3.6 3.9 M573.9 199.6l-2.9 3.3 M468.9 211.2l3.1 7.4 M764.2 245.6l6.6 -1.1 M685.1 188.0l-1.0 5.2 M554.5 196.8l7.9 -2.3 M751.0 193.9l-2.3 5.1 M708.8 238.6l4.7 -2.1 M567.4 244.8l9.1 -1.2 M459.5 212.3l2.1 3.2 M461.0 190.0l-1.9 7.5 M733.0 207.7l17.4 -1.8 M532.6 231.9l7.9 -3.0 M688.0 244.7l3.5 3.1 M523.7 216.4l3.6 5.3 M529.1 213.5l17.0 -2.6 M702.8 233.3l2.2 6.6 M553.3 206.5l15.0 -2.8 M512.2 234.2l4.9 -2.9 M624.1 206.8l3.1 8.9 M533.4 191.4l11.0 -1.6 M590.8 201.0l12.7 -1.7 M685.6 240.2l-3.0 8.0 M542.5 222.3l14.3 -2.6 M527.9 201.7l16.4 -1.8 M552.8 211.3l0.1 4.4 M704.7 227.8l-3.2 5.8 M708.0 239.8l-3.7 4.8 M487.6 198.1l0.7 8.6 M567.3 241.4l7.6 -1.4 M747.9 192.8l1.0 4.3 M566.1 195.0l7.6 -1.8 M655.3 199.0l8.6 -1.6 M508.3 206.0l15.1 -1.9 M469.9 192.5l11.7 -1.7 M478.7 196.5l-0.7 4.7 M546.9 247.0l11.9 -2.3 M581.2 241.3l-1.1 4.2 M679.3 199.0l16.6 -2.2 M708.4 212.0l-0.3 4.0 M454.7 221.3l3.3 3.5 M646.0 209.7l-2.8 4.7 M614.2 245.2l10.9 -1.4 M754.6 198.6l17.2 -1.0 M602.1 189.4l-0.9 8.4 M645.4 238.8l15.0 -2.6 M577.4 240.2l-2.5 4.3 M575.9 219.1l5.7 -2.5" stroke="#3a3600" stroke-width="0.5" fill="none" opacity="0.75"/></g>
<path d="M572 204L572 230M601 194l10 11M650 189l2 10M695 188l-5 25M700 205l35 20M478 204l4 -3h10l4 3M476 200l8 -4" stroke="#3a3600" stroke-width="0.55" fill="none" opacity="0.8"/>
<polygon points="523,277 766,233 766,241 523,282" fill="#cdc800"/>
<polygon points="449,222 523,277 523,282 449,226" fill="#cdc800"/>
<path d="M523.0 277.0v5.0 M532.7 275.2v5.1 M542.4 273.5v5.2 M552.2 271.7v5.4 M561.9 270.0v5.5 M571.6 268.2v5.6 M581.3 266.4v5.7 M591.0 264.7v5.8 M600.8 262.9v6.0 M610.5 261.2v6.1 M620.2 259.4v6.2 M629.9 257.6v6.3 M639.6 255.9v6.4 M649.4 254.1v6.6 M659.1 252.4v6.7 M668.8 250.6v6.8 M678.5 248.8v6.9 M688.2 247.1v7.0 M698.0 245.3v7.2 M707.7 243.6v7.3 M717.4 241.8v7.4 M727.1 240.0v7.5 M736.8 238.3v7.6 M746.6 236.5v7.8 M756.3 234.8v7.9 M766.0 233.0v8.0" stroke="#8c8800" stroke-width="0.5" opacity="0.8"/>
<path d="M449.5 226.5L523 282.5L590 271M620 266L686 255M720 249.5L766 242" stroke="#1e88dd" stroke-width="1.5" fill="none"/>
<path d="M523 277L766 233M449 222L523 277" stroke="#5a5600" stroke-width="0.6" fill="none"/>
</svg>
<div class="a" style="left:5.199999999999989px;top:5.70px;font-size:13.8px;line-height:16px;color:#e6e6e6"><i>计</i><i>划</i><i>进</i><i>度</i></div>
<div class="a" style="left:5.5px;top:24.50px;font-size:11px;line-height:13px;color:#e6e6e6"><i>未</i><i>开</i><i>始</i></div>
<div class="a" style="left:95.69999999999999px;top:26.20px;width:33.6px;height:10.8px;background:#666666"></div>
<div class="a" style="left:5.5px;top:41.33px;font-size:11px;line-height:13px;color:#e6e6e6"><i>未</i><i>开</i><i>始</i><b class="p">(</b><i>延</i><i>期</i><b class="p">)</b></div>
<div class="a" style="left:95.69999999999999px;top:43.03px;width:33.6px;height:10.8px;background:#ffb3b3"></div>
<div class="a" style="left:5.5px;top:58.16px;font-size:11px;line-height:13px;color:#e6e6e6"><i>执</i><i>行</i><i>中</i></div>
<div class="a" style="left:95.69999999999999px;top:59.86px;width:33.6px;height:10.8px;background:#00cc66"></div>
<div class="a" style="left:5.5px;top:74.99px;font-size:11px;line-height:13px;color:#e6e6e6"><i>执</i><i>行</i><i>中</i><b class="p">(</b><i>延</i><i>期</i><b class="p">)</b></div>
<div class="a" style="left:95.69999999999999px;top:76.69px;width:33.6px;height:10.8px;background:#ff0000"></div>
<div class="a" style="left:5.5px;top:91.82px;font-size:11px;line-height:13px;color:#e6e6e6"><i>已</i><i>完</i><i>成</i></div>
<div class="a" style="left:95.69999999999999px;top:93.52px;width:33.6px;height:10.8px;background:#0099ff"></div>
<div class="a" style="left:5.5px;top:108.65px;font-size:11px;line-height:13px;color:#e6e6e6"><i>已</i><i>完</i><i>成</i><b class="p">(</b><i>提</i><i>前</i><b class="p">)</b></div>
<div class="a" style="left:95.69999999999999px;top:110.35px;width:33.6px;height:10.8px;background:#cccc00"></div>
<div class="a" style="left:5.5px;top:125.48px;font-size:11px;line-height:13px;color:#e6e6e6"><i>已</i><i>完</i><i>成</i><b class="p">(</b><i>延</i><i>期</i><b class="p">)</b></div>
<div class="a" style="left:95.69999999999999px;top:127.18px;width:33.6px;height:10.8px;background:#ff99ff"></div>
<div class="a" style="left:5.5px;top:143.60px;font-family:'Liberation Mono',monospace;font-size:11.72px;line-height:14px;color:#e6e6e6;transform:scaleY(1.2);transform-origin:0 50%">2022-05-02 05:36:00</div>
<div class="a" style="left:5.5px;top:159.70px;font-size:11px;line-height:13px;color:#e6e6e6"><i>里</i><i>程</i><i>牌</i><i>　</i><i>综</i><i>合</i><i>诊</i><i>疗</i><i>及</i><i>住</i><i>院</i><i>部</i><i>　</i><i>裙</i><i>楼</i>A<i>、</i>E<i>、</i>B<i>、</i>D<i>　</i><i>主</i><i>体</i><i>施</i><i>工</i><i>及</i><i>验</i><i>收</i><i>阶</i><i>段</i></div>
<svg class="a" style="left:859.7px;top:8.70px" width="60" height="60" viewBox="1015 108 60 60">
<ellipse cx="1045.2" cy="149.8" rx="26.7" ry="14.8" fill="#d3d8e4" stroke="#9aa0aa" stroke-width="0.4"/>
<ellipse cx="1045.2" cy="148.3" rx="19.3" ry="10.2" fill="#424242"/>
<path d="M1023 156l3 2M1066 156l-3 2" stroke="#777" stroke-width="0.8"/>
<polygon points="1045.2,112 1065.8,122 1045.2,132.2 1024.5,122" fill="#dde1ec" stroke="#555" stroke-width="0.5"/>
<polygon points="1024.5,122 1045.2,132.2 1045.2,156.6 1026.5,143.6" fill="#d2d7e3" stroke="#555" stroke-width="0.5"/>
<polygon points="1065.8,122 1045.2,132.2 1045.2,156.6 1064.5,144.2" fill="#d6dbe7" stroke="#555" stroke-width="0.5"/>
<path d="M1038 125.5l10 -5M1041 119.5l4 6M1043.5 122.2l3 -1.5" stroke="#707070" stroke-width="0.8" fill="none"/>
<path d="M1031 131.5l7 3.5M1031.5 134v7l3 1.5v-7zM1036 136.5v7.5M1038.5 136v9.5l-1 -0.5" stroke="#707070" stroke-width="0.8" fill="none"/>
<path d="M1050.5 138l9 -4.5M1055 132l-3.5 9M1053 139.5v5l5 -2.5v-5z" stroke="#707070" stroke-width="0.8" fill="none"/>
</svg>

</div>
<div class="ln" style="left:152.5px;top:99px;width:2.8px;height:277px;background:#e6e6e6"></div>
<div class="ln" style="left:1078.7px;top:99px;width:1.3px;height:276px;background:#ececec"></div>

<!-- BOTTOM PANEL -->
<div class="ln" style="left:61.6px;top:396px;width:1016px;height:1px;background:#cfcfcf"></div>
<div class="a" style="left:0.5px;top:379.4px;width:61.6px;height:194px;border:1px solid #cfcfcf;border-bottom:none;border-right:none;background:#fff"></div>
<div class="ln" style="left:61.1px;top:379.4px;width:1px;height:17px;background:#cfcfcf"></div>
<div class="ln" style="left:1078.3px;top:396px;width:1px;height:177px;background:#cfcfcf"></div>
<div class="a t" style="left:4px;top:385px"><i>进</i><i>度</i><i>计</i><i>划</i><i>详</i><i>情</i></div>
<svg class="a" style="left:48px;top:385.5px" width="7" height="7"><path d="M1 1L6 6M6 1L1 6" stroke="#666" stroke-width="0.8"/></svg>
<div class="ln" style="left:6px;top:417.3px;width:35.5px;height:1px;background:#cfcfcf"></div>
<div class="ln" style="left:75.6px;top:417.3px;width:998px;height:1px;background:#cfcfcf"></div>
<div class="a" style="left:41.5px;top:402.5px;width:34.6px;height:15.5px;border:1px solid #cfcfcf;border-bottom:none;background:#fff"></div>
<div class="a t" style="left:10px;top:406px"><i>计</i><i>划</i><i>管</i><i>理</i></div>
<div class="a t" style="left:45px;top:406px"><i>进</i><i>度</i><i>模</i><i>拟</i></div>
<div class="ln" style="left:5.9px;top:417.3px;width:1px;height:156px;background:#cfcfcf"></div>
<div class="ln" style="left:1072.6px;top:417.3px;width:0.8px;height:156px;background:#cfcfcf"></div>
<div class="a" style="left:14px;top:424.2px;width:65.7px;height:13.8px;border:1px solid #cfcfcf;background:#fff"></div>
<div class="a t" style="left:40px;top:427.5px"><i>重</i><i>置</i></div>
<div class="a" style="left:83px;top:424.2px;width:65.7px;height:13.8px;border:1px solid #cfcfcf;background:#fff"></div>
<div class="a t" style="left:109px;top:427.5px"><i>暂</i><i>停</i></div>
<div class="a" style="left:14px;top:440.5px;width:101.5px;height:14.1px;border:1px solid #cfcfcf;background:#fff"></div>
<div class="a t" style="left:16.5px;top:443.8px;font-size:7.1px">2022-05-02 12:48:00</div>
<svg class="a" style="left:108.5px;top:446.6px" width="4" height="3"><path d="M0.3 0.5h3L1.8 2.5z" fill="#777"/></svg>
<div class="a" style="left:122px;top:440.5px;width:26.7px;height:14.1px;border:1px solid #cfcfcf;background:#fff"></div>
<div class="a t" style="left:128.5px;top:444px;color:#888"><i>设</i><i>置</i></div>
<div class="a" style="left:159.4px;top:427.8px;width:290px;height:3.2px;border-radius:1.6px;background:#5ba3ee"></div>
<div class="a" style="left:450px;top:427.6px;width:616px;height:3.4px;border-radius:1.7px;background:#d6d6d6;border-top:0.6px solid #c8c8c8"></div>
<div class="a" style="left:448.8px;top:425.4px;width:7.2px;height:7.4px;border-radius:1.6px;background:#fcfcfc;border:0.8px solid #d0d0d0"></div>
<div class="a t" style="left:159.5px;top:442.2px;font-size:7.1px">2021-07-08 08:00</div>
<div class="a t" style="left:1009.5px;top:442.2px;font-size:7.1px">2024-01-21 17:00</div>
<div class="a" style="left:9.2px;top:457.5px;width:521px;height:116px;border-top:1.4px solid #d4d4d4;border-left:1px solid #d8d8d8"></div>
<div class="ln" style="left:9.7px;top:481.2px;width:520px;height:0.8px;background:#e6e6e6"></div>
<div class="ln" style="left:237.6px;top:459px;width:0.8px;height:22.5px;background:#e6e6e6"></div>
<div class="ln" style="left:293.5px;top:459px;width:0.8px;height:22.5px;background:#e6e6e6"></div>
<div class="ln" style="left:349.5px;top:459px;width:0.8px;height:22.5px;background:#e6e6e6"></div>
<div class="ln" style="left:406.5px;top:459px;width:0.8px;height:22.5px;background:#e6e6e6"></div>
<div class="ln" style="left:462.8px;top:459px;width:0.8px;height:22.5px;background:#e6e6e6"></div>
<div class="ln" style="left:518.5px;top:459px;width:0.8px;height:22.5px;background:#e6e6e6"></div>
<div class="a t" style="left:83.5px;width:80px;text-align:center;top:467px"><i>节</i><i>点</i><i>名</i><i>称</i></div>
<div class="a t" style="left:225.5px;width:80px;text-align:center;top:467px"><i>工</i><i>期</i></div>
<div class="a t" style="left:281.5px;width:80px;text-align:center;top:467px"><i>计</i><i>划</i><i>开</i><i>始</i></div>
<div class="a t" style="left:338px;width:80px;text-align:center;top:467px"><i>计</i><i>划</i><i>完</i><i>成</i></div>
<div class="a t" style="left:394.6px;width:80px;text-align:center;top:467px"><i>完</i><i>成</i><i>度</i>%</div>
<div class="a t" style="left:450.6px;width:80px;text-align:center;top:467px"><i>实</i><i>际</i><i>工</i><i>期</i></div>
<svg class="a" style="left:12.50px;top:487.70px" width="5" height="4"><path d="M0.2 0.4h4.4L2.4 3z" fill="#333"/></svg>
<div class="a t" style="left:22.50px;top:485.10px;font-size:7px">2022<i>一</i><i>级</i><i>施</i><i>工</i><i>计</i><i>划</i><i>上</i><i>墙</i><i>（</i>2.26<i>调</i><i>整</i><i>式</i><i>用</i>2.26<i>加</i><i>前</i><i>期</i><i>）</i></div>
<div class="a t" style="left:404.6px;width:60px;text-align:center;top:485.10px;font-size:7.1px">0%</div>
<svg class="a" style="left:23.75px;top:500.45px" width="5" height="4"><path d="M0.2 0.4h4.4L2.4 3z" fill="#333"/></svg>
<div class="a t" style="left:33.75px;top:497.85px;font-size:7px"><i>里</i><i>程</i><i>牌</i></div>
<div class="a t" style="left:235.5px;width:60px;text-align:center;top:497.85px;font-size:7.1px">928<i>天</i></div>
<div class="a t" style="left:291.5px;width:60px;text-align:center;top:497.85px;font-size:7.1px">2021-07-08</div>
<div class="a t" style="left:348px;width:60px;text-align:center;top:497.85px;font-size:7.1px">2024-01-21</div>
<div class="a t" style="left:404.6px;width:60px;text-align:center;top:497.85px;font-size:7.1px">83.2%</div>
<svg class="a" style="left:35.00px;top:513.20px" width="5" height="4"><path d="M0.2 0.4h4.4L2.4 3z" fill="#333"/></svg>
<div class="a t" style="left:45.00px;top:510.60px;font-size:7px"><i>主</i><i>体</i><i>施</i><i>工</i><i>及</i><i>验</i><i>收</i><i>阶</i><i>段</i></div>
<div class="a t" style="left:235.5px;width:60px;text-align:center;top:510.60px;font-size:7.1px">414<i>天</i></div>
<div class="a t" style="left:291.5px;width:60px;text-align:center;top:510.60px;font-size:7.1px">2022-02-07</div>
<div class="a t" style="left:348px;width:60px;text-align:center;top:510.60px;font-size:7.1px">2023-03-27</div>
<div class="a t" style="left:404.6px;width:60px;text-align:center;top:510.60px;font-size:7.1px">44.92%</div>
<svg class="a" style="left:46.25px;top:525.95px" width="5" height="4"><path d="M0.2 0.4h4.4L2.4 3z" fill="#333"/></svg>
<div class="a t" style="left:56.25px;top:523.35px;font-size:7px"><i>综</i><i>合</i><i>诊</i><i>疗</i><i>及</i><i>住</i><i>院</i><i>部</i></div>
<div class="a t" style="left:235.5px;width:60px;text-align:center;top:523.35px;font-size:7.1px">414<i>天</i></div>
<div class="a t" style="left:291.5px;width:60px;text-align:center;top:523.35px;font-size:7.1px">2022-02-07</div>
<div class="a t" style="left:348px;width:60px;text-align:center;top:523.35px;font-size:7.1px">2023-03-27</div>
<div class="a t" style="left:404.6px;width:60px;text-align:center;top:523.35px;font-size:7.1px">46.67%</div>
<svg class="a" style="left:57.50px;top:538.70px" width="5" height="4"><path d="M0.2 0.4h4.4L2.4 3z" fill="#333"/></svg>
<div class="a t" style="left:67.50px;top:536.10px;font-size:7px"><i>裙</i><i>楼</i>A<i>、</i>E<i>、</i>B<i>、</i>D</div>
<div class="a t" style="left:235.5px;width:60px;text-align:center;top:536.10px;font-size:7.1px">414<i>天</i></div>
<div class="a t" style="left:291.5px;width:60px;text-align:center;top:536.10px;font-size:7.1px">2022-02-07</div>
<div class="a t" style="left:348px;width:60px;text-align:center;top:536.10px;font-size:7.1px">2023-03-27</div>
<div class="a t" style="left:404.6px;width:60px;text-align:center;top:536.10px;font-size:7.1px">64.17%</div>
<svg class="a" style="left:68.75px;top:551.45px" width="5" height="4"><path d="M0.2 0.4h4.4L2.4 3z" fill="#333"/></svg>
<div class="a t" style="left:78.75px;top:548.85px;font-size:7px"><i>二</i><i>次</i><i>结</i><i>构</i></div>
<div class="a t" style="left:235.5px;width:60px;text-align:center;top:548.85px;font-size:7.1px">288<i>天</i></div>
<div class="a t" style="left:291.5px;width:60px;text-align:center;top:548.85px;font-size:7.1px">2022-06-13</div>
<div class="a t" style="left:348px;width:60px;text-align:center;top:548.85px;font-size:7.1px">2023-03-27</div>
<div class="a t" style="left:404.6px;width:60px;text-align:center;top:548.85px;font-size:7.1px">40%</div>
<div class="a t" style="left:90.00px;top:561.60px;font-size:7px"><i>砌</i><i>筑</i><i>墙</i><i>结</i><i>构</i></div>
<div class="a t" style="left:235.5px;width:60px;text-align:center;top:561.60px;font-size:7.1px">134<i>天</i></div>
<div class="a t" style="left:291.5px;width:60px;text-align:center;top:561.60px;font-size:7.1px">2022-11-14</div>
<div class="a t" style="left:348px;width:60px;text-align:center;top:561.60px;font-size:7.1px">2023-03-27</div>
<div class="a t" style="left:404.6px;width:60px;text-align:center;top:561.60px;font-size:7.1px">100%</div>
<div class="a" style="left:9.7px;top:566.8px;width:521px;height:7px;background:#efefef;border-top:1px solid #dcdcdc"></div>
<div class="a" style="left:17.5px;top:567.5px;width:190px;height:6px;background:#fff;border-left:1px solid #ddd;border-right:1px solid #ddd"></div>
<svg class="a" style="left:11.5px;top:568.5px" width="4" height="5"><path d="M3.3 0.3v4L0.6 2.3z" fill="#555"/></svg>
<svg class="a" style="left:524.5px;top:568.5px" width="4" height="5"><path d="M0.7 0.3v4L3.4 2.3z" fill="#555"/></svg>
<div class="a" style="left:530.2px;top:458.2px;width:8.5px;height:108.6px;background:#f0f0f0;border:1px solid #d8d8d8"></div>
<div class="a" style="left:531px;top:459px;width:7px;height:7.4px;background:#fff;border-bottom:1px solid #d8d8d8"></div>
<svg class="a" style="left:532px;top:460.5px" width="5" height="4"><path d="M0.4 3.3h4L2.4 0.8z" fill="#555"/></svg>
<div class="a" style="left:531px;top:467px;width:7px;height:14px;background:#fff;border-bottom:1px solid #d8d8d8"></div>
<div class="a" style="left:531px;top:559.5px;width:7px;height:6.6px;background:#fff;border-top:1px solid #d8d8d8"></div>
<svg class="a" style="left:532px;top:561px" width="5" height="4"><path d="M0.4 0.6h4L2.4 3.2z" fill="#555"/></svg>
<div class="a" style="left:541.2px;top:457.8px;width:530.0999999999999px;height:116px;border-top:1.4px solid #d4d4d4;border-left:1px solid #d8d8d8;border-right:1px solid #d8d8d8"></div>
<div class="ln" style="left:792.5px;top:482px;width:112.6px;height:84.5px;background:#e3e3e3"></div>
<div class="ln" style="left:541.2px;top:469.2px;width:530.0999999999999px;height:0.8px;background:#efefef"></div>
<div class="ln" style="left:541.2px;top:480.8px;width:530.0999999999999px;height:1.4px;background:#e0e0e0"></div>
<div class="ln" style="left:905.1px;top:459px;width:0.8px;height:10.5px;background:#e6e6e6"></div>
<div class="a t" style="left:668.5px;width:80px;text-align:center;top:460.8px;font-size:7.3px"><i>第</i>18<i>周</i>/2022</div>
<div class="ln" style="left:568.2px;top:470px;width:0.8px;height:11.5px;background:#ececec"></div>
<div class="a" style="left:568.2px;top:482px;width:0;height:84.5px;border-left:0.8px dashed #b4b4b4"></div>
<div class="a t" style="left:576.4px;width:40px;text-align:center;top:472.5px"><i>周</i><i>二</i></div>
<div class="ln" style="left:624.6px;top:470px;width:0.8px;height:11.5px;background:#ececec"></div>
<div class="a" style="left:624.6px;top:482px;width:0;height:84.5px;border-left:0.8px dashed #b4b4b4"></div>
<div class="a t" style="left:632.8px;width:40px;text-align:center;top:472.5px"><i>周</i><i>三</i></div>
<div class="ln" style="left:681px;top:470px;width:0.8px;height:11.5px;background:#ececec"></div>
<div class="a" style="left:681px;top:482px;width:0;height:84.5px;border-left:0.8px dashed #b4b4b4"></div>
<div class="a t" style="left:689.1px;width:40px;text-align:center;top:472.5px"><i>周</i><i>四</i></div>
<div class="ln" style="left:737.3px;top:470px;width:0.8px;height:11.5px;background:#ececec"></div>
<div class="a" style="left:737.3px;top:482px;width:0;height:84.5px;border-left:0.8px dashed #b4b4b4"></div>
<div class="a t" style="left:744.9px;width:40px;text-align:center;top:472.5px"><i>周</i><i>五</i></div>
<div class="ln" style="left:792.5px;top:470px;width:0.8px;height:11.5px;background:#ececec"></div>
<div class="a" style="left:792.5px;top:482px;width:0;height:84.5px;border-left:0.8px dashed #b4b4b4"></div>
<div class="a t" style="left:800.5px;width:40px;text-align:center;top:472.5px"><i>周</i><i>六</i></div>
<div class="ln" style="left:848.5px;top:470px;width:0.8px;height:11.5px;background:#ececec"></div>
<div class="a" style="left:848.5px;top:482px;width:0;height:84.5px;border-left:0.8px dashed #b4b4b4"></div>
<div class="a t" style="left:856.8px;width:40px;text-align:center;top:472.5px"><i>周</i><i>日</i></div>
<div class="ln" style="left:905.1px;top:470px;width:0.8px;height:11.5px;background:#ececec"></div>
<div class="a" style="left:905.1px;top:482px;width:0;height:84.5px;border-left:0.8px dashed #b4b4b4"></div>
<div class="a t" style="left:913.3px;width:40px;text-align:center;top:472.5px"><i>周</i><i>一</i></div>
<div class="ln" style="left:961.5px;top:470px;width:0.8px;height:11.5px;background:#ececec"></div>
<div class="a" style="left:961.5px;top:482px;width:0;height:84.5px;border-left:0.8px dashed #b4b4b4"></div>
<div class="a t" style="left:969.7px;width:40px;text-align:center;top:472.5px"><i>周</i><i>二</i></div>
<div class="ln" style="left:1017.9px;top:470px;width:0.8px;height:11.5px;background:#ececec"></div>
<div class="a" style="left:1017.9px;top:482px;width:0;height:84.5px;border-left:0.8px dashed #b4b4b4"></div>
<div class="a t" style="left:1026.1px;width:40px;text-align:center;top:472.5px"><i>周</i><i>三</i></div>
<div class="ln" style="left:541.7px;top:484px;width:529.0999999999999px;height:5.2px;background:#0000c8"></div>
<div class="a" style="left:541.7px;top:498.1px;width:529.0999999999999px;height:4px;background:#98f098;border-top:1px solid #4f634f;border-bottom:1px solid #4f634f"></div>
<div class="a" style="left:541.7px;top:511px;width:529.0999999999999px;height:4px;background:#98f098;border-top:1px solid #4f634f;border-bottom:1px solid #4f634f"></div>
<div class="a" style="left:541.7px;top:524px;width:529.0999999999999px;height:4px;background:#98f098;border-top:1px solid #4f634f;border-bottom:1px solid #4f634f"></div>
<div class="a" style="left:541.7px;top:537px;width:529.0999999999999px;height:4px;background:#98f098;border-top:1px solid #4f634f;border-bottom:1px solid #4f634f"></div>
<div class="a" style="left:541.7px;top:566.8px;width:529.0999999999999px;height:7px;background:#efefef;border-top:1px solid #dcdcdc"></div>
<div class="a" style="left:711.5px;top:567.5px;width:14.2px;height:6px;background:#fff;border-left:1px solid #ddd;border-right:1px solid #ddd"></div>
<svg class="a" style="left:543.5px;top:568.5px" width="4" height="5"><path d="M3.3 0.3v4L0.6 2.3z" fill="#555"/></svg>
<div class="a" style="left:1062.5px;top:567.3px;width:8px;height:6px;background:#fff;border-left:1px solid #ddd"></div>
<svg class="a" style="left:1065px;top:568.5px" width="4" height="5"><path d="M0.7 0.3v4L3.4 2.3z" fill="#555"/></svg>
<div class="a" style="left:1074.2px;top:548.4px;width:6px;height:25px;border-radius:1.5px 0 0 0;background:#3e4650"></div>
<div class="a" style="left:1076.5px;top:565px;width:2px;height:8px;background:linear-gradient(#b8c040,#58c070)"></div>
</body></html>
